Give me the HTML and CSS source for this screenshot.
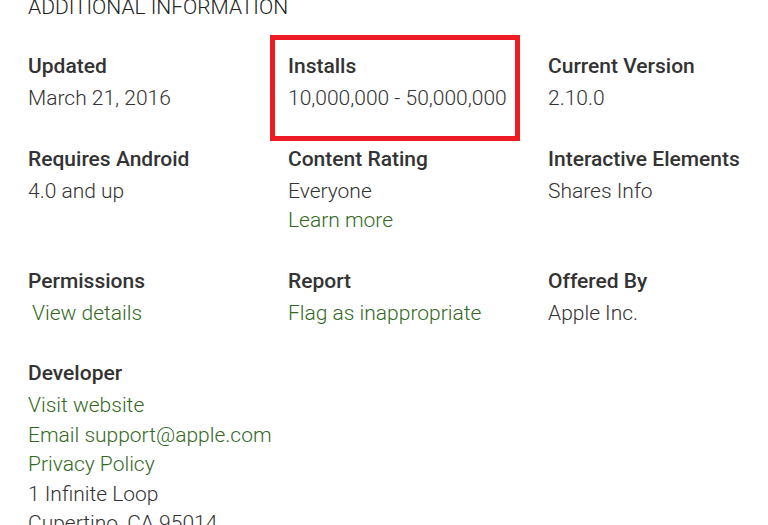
FILE: index.html
```html
<!DOCTYPE html>
<html lang="en">
<head>
  <meta charset="UTF-8">
  <meta name="viewport" content="width=device-width, initial-scale=1.0">
  <title>Additional Information</title>
  <link rel="stylesheet" href="styles.css">
</head>
<body>
  <div class="details">
    <h2 class="heading">Additional Information</h2>
    <div class="meta-grid">
      <div class="meta">
        <div class="title">Updated</div>
        <div class="value">March 21, 2016</div>
      </div>
      <div class="meta highlighted">
        <div class="title">Installs</div>
        <div class="value">10,000,000 - 50,000,000</div>
      </div>
      <div class="meta">
        <div class="title">Current Version</div>
        <div class="value">2.10.0</div>
      </div>

      <div class="meta">
        <div class="title">Requires Android</div>
        <div class="value">4.0 and up</div>
      </div>
      <div class="meta">
        <div class="title">Content Rating</div>
        <div class="value">Everyone</div>
        <div class="value"><a href="#">Learn more</a></div>
      </div>
      <div class="meta">
        <div class="title">Interactive Elements</div>
        <div class="value">Shares Info</div>
      </div>

      <div class="meta">
        <div class="title">Permissions</div>
        <div class="value indent"><a href="#">View details</a></div>
      </div>
      <div class="meta">
        <div class="title">Report</div>
        <div class="value"><a href="#">Flag as inappropriate</a></div>
      </div>
      <div class="meta">
        <div class="title">Offered By</div>
        <div class="value">Apple Inc.</div>
      </div>

      <div class="meta">
        <div class="title">Developer</div>
        <div class="value"><a href="#">Visit website</a></div>
        <div class="value"><a href="#">Email support@apple.com</a></div>
        <div class="value"><a href="#">Privacy Policy</a></div>
        <div class="value">1 Infinite Loop</div>
        <div class="value">Cupertino, CA 95014</div>
      </div>
    </div>
  </div>
</body>
</html>
```

FILE: styles.css
```css
body {
  margin: 0;
  padding: 0 0 0 28px;
  background: #fff;
  color: #333;
  font-family: Roboto, "Liberation Sans", Arial, sans-serif;
  overflow: hidden;
}
.heading {
  margin: -5px 0 32px;
  font-size: 21px;
  font-weight: 300;
  line-height: 24px;
  text-transform: uppercase;
  color: #212121;
}
.meta-grid {
  display: grid;
  grid-template-columns: repeat(3, 260px);
  row-gap: 30px;
}
.meta {
  position: relative;
}
.title {
  font-size: 21px;
  font-weight: 500;
  line-height: 30px;
  margin-bottom: 3px;
  color: #333;
}
.value {
  font-size: 21px;
  font-weight: 300;
  line-height: 29.5px;
  color: #333;
}
.value a {
  color: #33691e;
  text-decoration: none;
}
.indent {
  padding-left: 4px;
}
.highlighted::after {
  content: "";
  position: absolute;
  left: -18px;
  top: -16px;
  width: 240px;
  height: 96px;
  border: 5px solid #ed1c24;
}
```
